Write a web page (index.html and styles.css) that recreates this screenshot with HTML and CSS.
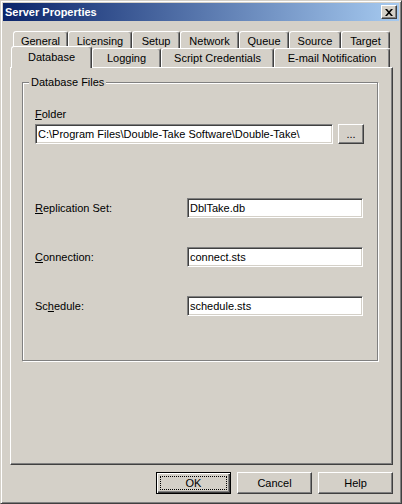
FILE: index.html
```html
<!DOCTYPE html>
<html lang="en">
<head>
    <meta charset="UTF-8">
    <title>Server Properties</title>
    <link rel="stylesheet" href="styles.css">
</head>
<body>
    <div class="window">
        <div class="titlebar">
            <span class="title">Server Properties</span>
            <button class="close" type="button">
                <svg width="8" height="7" viewBox="0 0 8 7"><path d="M0 0h2l2 2.2L6 0h2L5 3.5 8 7H6L4 4.8 2 7H0l3-3.5z" fill="#000"/></svg>
            </button>
        </div>

        <div class="content">
            <div class="tab-row back">
                <div class="tab">General</div>
                <div class="tab">Licensing</div>
                <div class="tab">Setup</div>
                <div class="tab">Network</div>
                <div class="tab">Queue</div>
                <div class="tab">Source</div>
                <div class="tab">Target</div>
            </div>
            <div class="tab-row front">
                <div class="tab selected">Database</div>
                <div class="tab">Logging</div>
                <div class="tab">Script Credentials</div>
                <div class="tab">E-mail Notification</div>
            </div>

            <div class="panel">
                <fieldset class="group">
                    <legend>Database Files</legend>
                    <label class="folder-label" for="folder"><u>F</u>older</label>
                    <div class="folder-row">
                        <input type="text" id="folder" value="C:\Program Files\Double-Take Software\Double-Take\">
                        <button class="btn browse" type="button">...</button>
                    </div>

                    <div class="fields">
                        <label for="repl"><u>R</u>eplication Set:</label>
                        <input type="text" id="repl" value="DblTake.db">
                        <label for="conn"><u>C</u>onnection:</label>
                        <input type="text" id="conn" value="connect.sts">
                        <label for="sched">Sc<u>h</u>edule:</label>
                        <input type="text" id="sched" value="schedule.sts">
                    </div>
                </fieldset>
            </div>

            <div class="actions">
                <button class="btn default" type="button">OK</button>
                <button class="btn" type="button">Cancel</button>
                <button class="btn" type="button">Help</button>
            </div>
        </div>
    </div>
</body>
</html>
```

FILE: styles.css
```css
body {
    margin: 0;
    background-color: #d4d0c8;
    font-family: "Liberation Sans", Arial, sans-serif;
    font-size: 11px;
    color: #000;
}
.window {
    width: 402px;
    height: 504px;
    box-sizing: border-box;
    border: 1px solid;
    border-color: #d4d0c8 #404040 #404040 #d4d0c8;
    box-shadow: inset 1px 1px #fff, inset -1px -1px #808080;
    padding: 2px;
    background-color: #d4d0c8;
}
.titlebar {
    height: 18px;
    display: flex;
    align-items: center;
    padding-left: 2px;
    background: linear-gradient(to right, #0a246a, #a6caf0);
}
.title {
    color: #fff;
    font-weight: bold;
    font-size: 11px;
}
.close {
    margin-left: auto;
    margin-right: 2px;
    width: 16px;
    height: 14px;
    padding: 0;
    display: flex;
    align-items: center;
    justify-content: center;
    background-color: #d4d0c8;
    border: 1px solid;
    border-color: #fff #404040 #404040 #fff;
    box-shadow: inset -1px -1px #808080;
}
.content {
    padding: 10px 6px 0 7px;
}

/* tabs */
.tab-row {
    display: flex;
    padding-left: 3px;
}
.tab-row.back {
    height: 17px;
}
.tab-row.front {
    height: 19px;
}
.tab {
    box-sizing: border-box;
    height: 100%;
    border: 1px solid;
    border-bottom: none;
    border-color: #fff #404040 transparent #fff;
    border-radius: 3px 3px 0 0;
    box-shadow: inset -1px 0 #808080;
    text-align: center;
    padding-top: 3px;
    white-space: nowrap;
    background-color: #d4d0c8;
}
.back .tab:nth-child(1) { width: 55px; }
.back .tab:nth-child(2) { width: 64px; }
.back .tab:nth-child(3) { width: 48px; }
.back .tab:nth-child(4) { width: 59px; }
.back .tab:nth-child(5) { width: 50px; }
.back .tab:nth-child(6) { width: 52px; }
.back .tab:nth-child(7) { width: 49px; }
.front .tab:nth-child(1) { width: 81px; }
.front .tab:nth-child(2) { width: 69px; }
.front .tab:nth-child(3) { width: 113px; }
.front .tab:nth-child(4) { width: 116px; }
.tab.selected {
    position: relative;
    z-index: 1;
    height: 22px;
    margin: -2px 0 -1px -2px;
    padding-top: 4px;
}

/* page */
.panel {
    height: 398px;
    box-sizing: border-box;
    border: 1px solid;
    border-color: #fff #404040 #404040 #fff;
    box-shadow: inset -1px -1px #808080;
    padding: 8px 14px 0 11px;
}
.group {
    margin: 0;
    height: 285px;
    box-sizing: border-box;
    padding: 0 13px 0 12px;
    border: 1px solid #808080;
    box-shadow: inset 1px 1px #fff, 1px 1px #fff;
}
.group legend {
    margin-left: -6px;
    padding: 0 2px;
    line-height: 13px;
    background-color: #d4d0c8;
}
.folder-label {
    display: block;
    margin-top: 19px;
    line-height: 13px;
}
.folder-row {
    display: flex;
    margin-top: 3px;
}
input[type="text"] {
    box-sizing: border-box;
    height: 20px;
    margin: 0;
    padding: 0 2px;
    border: 1px solid;
    border-color: #808080 #fff #fff #808080;
    box-shadow: inset 1px 1px #404040, inset -1px -1px #d4d0c8;
    background-color: #fff;
    font-family: inherit;
    font-size: 11px;
    color: #000;
    outline: none;
}
#folder {
    width: 298px;
}
.fields {
    display: grid;
    grid-template-columns: 152px 176px;
    row-gap: 29px;
    align-items: center;
    margin-top: 54px;
}

/* buttons */
.btn {
    box-sizing: border-box;
    margin: 0;
    padding: 0;
    background-color: #d4d0c8;
    border: 1px solid;
    border-color: #fff #404040 #404040 #fff;
    box-shadow: inset -1px -1px #808080;
    font-family: inherit;
    font-size: 11px;
    color: #000;
}
.browse {
    width: 26px;
    height: 20px;
    margin-left: 5px;
}
.actions {
    display: flex;
    justify-content: flex-end;
    gap: 6px;
    margin-top: 7px;
}
.actions .btn {
    width: 75px;
    height: 22px;
}
.btn.default {
    border-color: #000;
    box-shadow: inset 1px 1px #fff, inset -1px -1px #404040, inset -2px -2px #808080;
    outline: 1px dotted #000;
    outline-offset: -5px;
}
```
